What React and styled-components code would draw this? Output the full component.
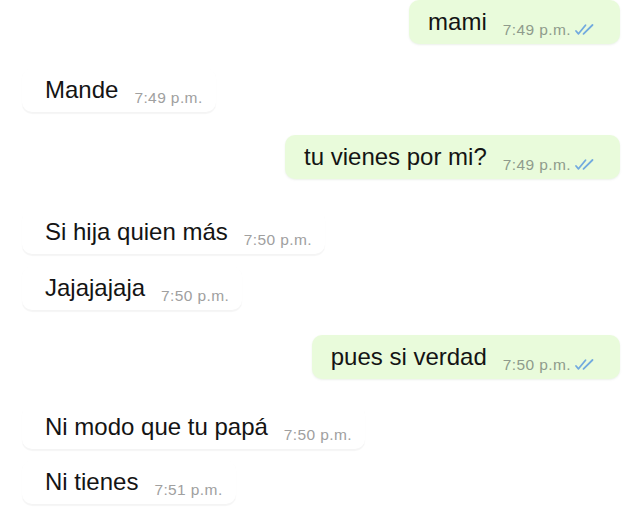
import React from "react";
import styled, { createGlobalStyle } from "styled-components";

const GlobalStyle = createGlobalStyle`
  html, body {
    margin: 0;
    padding: 0;
    background: #ffffff;
  }
  body {
    font-family: "Liberation Sans", Arial, Helvetica, sans-serif;
    -webkit-font-smoothing: antialiased;
  }
`;

const Chat = styled.div`
  width: 640px;
  height: 508px;
  overflow: hidden;
  background: #ffffff;
  display: flex;
  flex-direction: column;
`;

const Row = styled.div`
  display: flex;
  justify-content: ${(p) => (p.$out ? "flex-end" : "flex-start")};
  margin-top: ${(p) => p.$space}px;
  padding: ${(p) => (p.$out ? "0 20px 0 0" : "0 0 0 22px")};
`;

const Bubble = styled.div`
  display: inline-block;
  box-sizing: border-box;
  height: 44px;
  padding: ${(p) => (p.$out ? "8px 24px 8px 19px" : "8px 13px 8px 23px")};
  border-radius: 10px;
  background: ${(p) => (p.$out ? "#e9fbdb" : "#ffffff")};
  box-shadow: ${(p) =>
    p.$out
      ? "0 1px 2px rgba(120, 150, 110, 0.14)"
      : "0 1.5px 1px rgba(0, 0, 0, 0.045)"};
  white-space: nowrap;
`;

const Text = styled.span`
  font-size: 24px;
  line-height: 28px;
  color: #141414;
`;

const Meta = styled.span`
  display: inline-block;
  margin-left: 16px;
  font-size: 15.5px;
  line-height: 18px;
  letter-spacing: 0.4px;
  color: ${(p) => (p.$out ? "#8f9b8c" : "#a0a0a0")};
  vertical-align: -5px;
`;

const Ticks = styled.svg`
  display: inline-block;
  width: 22px;
  height: 13px;
  margin-left: 3px;
  vertical-align: -1px;
`;

function DoubleTick() {
  return (
    <Ticks viewBox="0 0 22 13" fill="none">
      <path
        d="M2 8 L4.5 10.8 L11.5 2.2"
        stroke="#72aadf"
        strokeWidth="1.8"
        strokeLinecap="round"
        strokeLinejoin="round"
      />
      <path
        d="M9.5 10.8 L18.5 2"
        stroke="#72aadf"
        strokeWidth="1.8"
        strokeLinecap="round"
      />
    </Ticks>
  );
}

const messages = [
  { out: true, text: "mami", time: "7:49 p.m.", space: 0 },
  { out: false, text: "Mande", time: "7:49 p.m.", space: 24 },
  { out: true, text: "tu vienes por mi?", time: "7:49 p.m.", space: 23 },
  { out: false, text: "Si hija quien más", time: "7:50 p.m.", space: 31 },
  { out: false, text: "Jajajajaja", time: "7:50 p.m.", space: 12 },
  { out: true, text: "pues si verdad", time: "7:50 p.m.", space: 25 },
  { out: false, text: "Ni modo que tu papá", time: "7:50 p.m.", space: 26 },
  { out: false, text: "Ni tienes", time: "7:51 p.m.", space: 11 },
];

export default function App() {
  return (
    <>
      <GlobalStyle />
      <Chat>
        {messages.map((m, i) => (
          <Row key={i} $out={m.out} $space={m.space}>
            <Bubble $out={m.out}>
              <Text>{m.text}</Text>
              <Meta $out={m.out}>
                {m.time}
                {m.out && <DoubleTick />}
              </Meta>
            </Bubble>
          </Row>
        ))}
      </Chat>
    </>
  );
}
